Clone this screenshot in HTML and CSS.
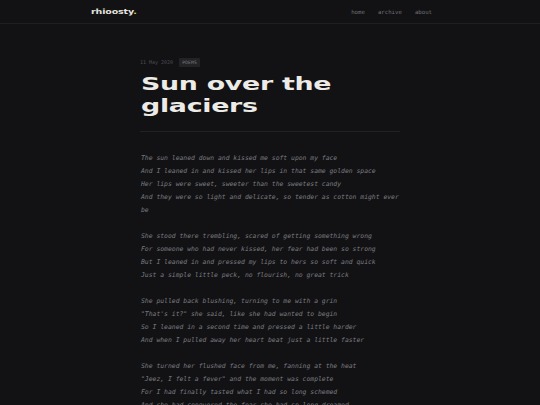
FILE: index.html
```html
<!DOCTYPE html>
<html>
<head>
<meta charset="utf-8">
<link rel="stylesheet" href="styles.css">
</head>
<body>
<header class="site-header">
  <a class="logo" href="#">rhioosty<span class="dot">.</span></a>
  <nav class="nav">
    <a href="#">home</a>
    <a href="#">archive</a>
    <a href="#">about</a>
  </nav>
</header>
<main class="post">
  <div class="meta">
    <span class="date">11 May 2020</span>
    <span class="tag">POEMS</span>
  </div>
  <h1 class="title"><span class="t-line">Sun over the</span><span class="t-line">glaciers</span></h1>
  <hr class="divider">
  <div class="poem">
    <p>The sun leaned down and kissed me soft upon my face<br>And I leaned in and kissed her lips in that same golden space<br>Her lips were sweet, sweeter than the sweetest candy<br>And they were so light and delicate, so tender as cotton might ever be</p>
    <p>She stood there trembling, scared of getting something wrong<br>For someone who had never kissed, her fear had been so strong<br>But I leaned in and pressed my lips to hers so soft and quick<br>Just a simple little peck, no flourish, no great trick</p>
    <p>She pulled back blushing, turning to me with a grin<br>"That's it?" she said, like she had wanted to begin<br>So I leaned in a second time and pressed a little harder<br>And when I pulled away her heart beat just a little faster</p>
    <p>She turned her flushed face from me, fanning at the heat<br>"Jeez, I felt a fever" and the moment was complete<br>For I had finally tasted what I had so long schemed<br>And she had conquered the fear she had so long dreamed</p>
  </div>
</main>
</body>
</html>
```
FILE: styles.css
```css
html, body {
  margin: 0;
  padding: 0;
  background: #121215;
  height: 100%;
  overflow: hidden;
}
body {
  font-family: "DejaVu Sans Mono", "Liberation Mono", monospace;
}
a { text-decoration: none; }

.site-header {
  height: 23px;
  border-bottom: 1px solid #1f1f23;
  display: flex;
  align-items: center;
  justify-content: space-between;
  padding: 0 108px 0 91px;
}
.logo {
  font-family: "DejaVu Sans", sans-serif;
  font-weight: bold;
  font-size: 7.2px;
  color: #e4e2dc;
  display: inline-block;
  transform: scaleX(1.32);
  transform-origin: left center;
  letter-spacing: -0.1px;
}
.logo .dot { color: #c9d36a; }
.nav {
  display: flex;
  gap: 13px;
}
.nav a {
  font-family: "DejaVu Sans Mono", monospace;
  font-size: 5.7px;
  color: #707074;
}

.post {
  width: 260px;
  margin: 0 auto;
  padding-top: 33px;
}
.meta {
  display: flex;
  align-items: center;
  gap: 6px;
  height: 10px;
}
.date {
  font-size: 5px;
  color: #4c4c51;
}
.tag {
  font-size: 4.6px;
  color: #7a7a7e;
  background: #232326;
  padding: 2px 3px;
  border-radius: 1px;
  letter-spacing: 0.2px;
}
.title {
  margin: 6px 0 0 1px;
  font-family: "DejaVu Sans", sans-serif;
  font-weight: bold;
  font-size: 18.5px;
  line-height: 22px;
  color: #ecebe6;
  letter-spacing: -0.2px;
}
.t-line {
  display: block;
  transform: scaleX(1.45);
  transform-origin: left center;
}
.divider {
  border: 0;
  border-top: 1px solid #222226;
  margin: 14px 0 0 0;
}
.poem {
  margin-top: 20px;
  font-family: "DejaVu Sans Mono", monospace;
  font-style: italic;
  font-size: 6.4px;
  line-height: 13px;
  color: #7d7d80;
}
.poem p {
  margin: 0 0 13px 1px;
}
```
